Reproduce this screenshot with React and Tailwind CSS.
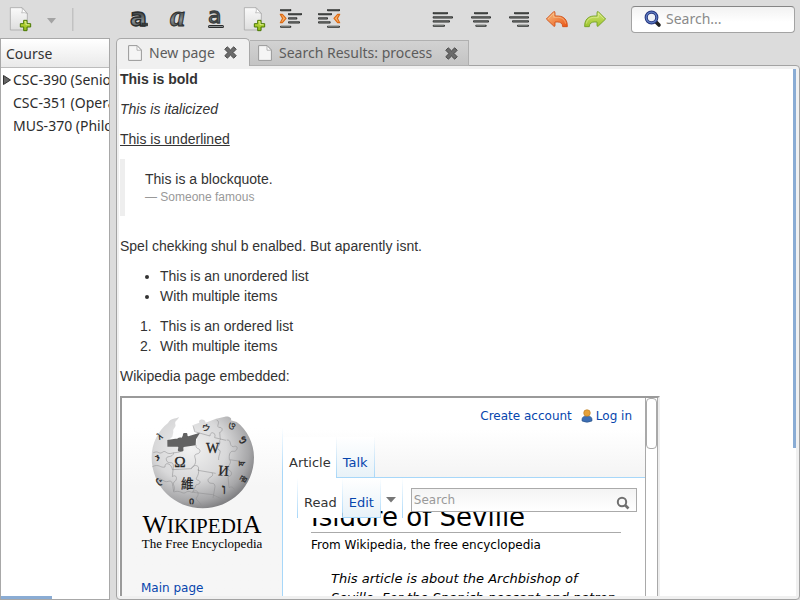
import React from "react";

const tools = "h-[38px] w-[38px] shrink-0";

function ToolButton({ label, box = "0 0 38 38", children }) {
  return (
    <button type="button" aria-label={label} title={label} className={tools}>
      <svg viewBox={box} className="block h-full w-full">{children}</svg>
    </button>
  );
}

function Bars({ rows }) {
  return rows.map(([x, y, w]) => (
    <g key={y}>
      <rect x={x} y={y - 3} width={w} height="6.5" rx="3" fill="#262827" />
      <rect x={x + 2} y={y - 1.5} width={w - 5} height="2.2" rx="1" fill="#8b8e8c" />
    </g>
  ));
}

function NewDoc() {
  return (
    <g>
      <path d="M31 23H66L82 40V90H31Z" fill="url(#paper)" stroke="#a9a9a9" strokeWidth="2.5" strokeLinejoin="round" />
      <path d="M66 23C68 30 67 35 65 39C71 37 77 38 82 41Z" fill="#fff" stroke="#a9a9a9" strokeWidth="2" />
      <path d="M71 61H81V71H92V81H81V92H71V81H61V71H71Z" fill="url(#plus)" stroke="#4b7a05" strokeWidth="3" strokeLinejoin="round" />
      <path d="M74 65H78V74H88" fill="none" stroke="#eaf6b0" strokeWidth="2" />
    </g>
  );
}

function PageIcon() {
  return (
    <svg viewBox="0 0 14 16" className="h-4 w-[14px] shrink-0">
      <path d="M.6.6H9.2L13.4 5V15.4H.6Z" fill="#f5f5f5" stroke="#999" strokeWidth="1" />
      <path d="M9 .8V5.2H13.3Z" fill="#fff" stroke="#a5a5a5" strokeWidth=".8" />
    </svg>
  );
}

function CloseButton() {
  return (
    <button type="button" aria-label="Close tab" className="shrink-0">
      <svg viewBox="0 0 13 13" className="block h-[13px] w-[13px]">
        <path d="M3.3.8L6.5 3.9L9.7.8L12.2 3.3L9 6.5L12.2 9.7L9.7 12.2L6.5 9.1L3.3 12.2L.8 9.7L4 6.5L.8 3.3Z" fill="#6b6b6b" stroke="#484848" strokeWidth="1" strokeLinejoin="round" />
      </svg>
    </button>
  );
}

function Toolbar() {
  return (
    <header className="flex h-[38px] shrink-0 items-center pr-[5px]">
      <svg className="absolute h-0 w-0" aria-hidden="true">
        <defs>
          <linearGradient id="paper" x2="0" y2="1"><stop stopColor="#fafafa" /><stop offset="1" stopColor="#dedede" /></linearGradient>
          <linearGradient id="plus" x2="0" y2="1"><stop stopColor="#c9e043" /><stop offset="1" stopColor="#8db81a" /></linearGradient>
          <linearGradient id="ink" x2="0" y2="1"><stop offset=".4" stopColor="#4a4f50" /><stop offset=".65" stopColor="#8a9092" /><stop offset=".85" stopColor="#4a4f50" /></linearGradient>
          <linearGradient id="undo" x2="1" y2="1"><stop stopColor="#f8c184" /><stop offset="1" stopColor="#ea5414" /></linearGradient>
          <linearGradient id="redo" x2="0" y2="1"><stop stopColor="#d3e573" /><stop offset="1" stopColor="#9cc42c" /></linearGradient>
        </defs>
      </svg>
      <ToolButton label="New page" box="0 0 114 114"><NewDoc /></ToolButton>
      <button type="button" aria-label="More new items" className="flex h-[38px] w-[26px] items-center justify-center">
        <svg viewBox="0 0 10 6" className="mt-1 ml-[2px] h-[6px] w-[10px]"><path d="M0 0H9L4.500 5.500Z" fill="#a3a3a3" /></svg>
      </button>
      <div className="mr-[46px] ml-2 h-[23px] w-[2px] border-l border-[#c2c2c2] bg-[#cfcfcf]" />
      <ToolButton label="Bold">
        <text x="10" y="25.500" fontFamily="DejaVu Sans" fontWeight="700" fontSize="25" fill="url(#ink)" stroke="#2b2d2d" strokeWidth="1.400">a</text>
        <path d="M22 23.300H27.500V25.800H22Z" fill="#3a3f40" stroke="#2b2d2d" strokeWidth=".8" strokeLinejoin="round" />
      </ToolButton>
      <ToolButton label="Italic">
        <text x="12" y="25.500" fontFamily="Liberation Serif" fontStyle="italic" fontWeight="700" fontSize="30" fill="url(#ink)" stroke="#2b2d2d" strokeWidth="1">a</text>
      </ToolButton>
      <ToolButton label="Underline">
        <text x="12" y="23" fontFamily="DejaVu Sans" fontSize="22" fill="url(#ink)" stroke="#3a3f40" strokeWidth="1.300">a</text>
        <rect x="12" y="25" width="16" height="3" rx="1.500" fill="#2b2d2d" />
        <rect x="13" y="26" width="14" height="1" fill="#8a9092" />
      </ToolButton>
      <ToolButton label="Insert page" box="0 0 114 114"><NewDoc /></ToolButton>
      <ToolButton label="Indent" box="246 0 114 114">
        <Bars rows={[[270, 30, 34], [294, 42, 42], [294, 55, 28], [294, 67, 36], [270, 80, 34]]} />
        <path d="M271 43H277L288 55L277 68H271L278 55Z" fill="#f9b06a" stroke="#dc6a12" strokeWidth="3.500" strokeLinejoin="round" />
      </ToolButton>
      <ToolButton label="Outdent" box="360 0 114 114">
        <Bars rows={[[411, 30, 39], [384, 42, 42], [384, 55, 30], [384, 67, 38], [411, 80, 39]]} />
        <path d="M449 43H443L432 55L443 68H449L442 55Z" fill="#f9b06a" stroke="#dc6a12" strokeWidth="3.500" strokeLinejoin="round" />
      </ToolButton>
      <div className="w-[76px] shrink-0" />
      <ToolButton label="Align left" box="12 0 114 114"><Bars rows={[[38, 39, 46], [38, 52, 61], [38, 64, 52], [38, 77, 37]]} /></ToolButton>
      <ToolButton label="Align center" box="126 0 114 114"><Bars rows={[[162, 39, 42], [153, 52, 60], [159, 64, 48], [166, 77, 34]]} /></ToolButton>
      <ToolButton label="Align right" box="240 0 114 114"><Bars rows={[[282, 39, 45], [267, 52, 60], [276, 64, 51], [291, 77, 36]]} /></ToolButton>
      <ToolButton label="Undo" box="354 0 114 114">
        <path d="M379 57L401 35Q405 33 405 39V48H415C432 49 443 60 442 80H428C428 70 421 66 413 66H405V76Q405 81 401 78Z" fill="url(#undo)" stroke="#cf4a12" strokeWidth="2.500" strokeLinejoin="round" />
        <path d="M384 57L401 40V52H416C427 53 435 60 437 71" fill="none" stroke="#fbd9a8" strokeWidth="2" opacity=".7" />
      </ToolButton>
      <ToolButton label="Redo" box="468 0 114 114">
        <path d="M557 57L535 35Q531 33 531 39V48H521C504 49 493 60 494 80H508C508 70 515 66 523 66H531V76Q531 81 535 78Z" fill="url(#redo)" stroke="#6f9c22" strokeWidth="2.500" strokeLinejoin="round" />
        <path d="M552 57L535 40V52H520C509 53 501 60 499 71" fill="none" stroke="#eef7b8" strokeWidth="2" opacity=".7" />
      </ToolButton>
      <label className="ml-[17px] flex h-[27px] min-w-0 flex-1 items-center rounded-[4px] border border-[#a3a3a3] border-t-[#858585] bg-gradient-to-b from-[#f2f2f2] to-white to-60% pl-3">
        <svg viewBox="0 0 18 18" className="h-[18px] w-[18px] shrink-0">
          <path d="M11.500 11.500L15 15" stroke="#222" strokeWidth="3.600" strokeLinecap="round" />
          <circle cx="7.500" cy="7.500" r="5.300" fill="#eef1f6" stroke="#26357f" strokeWidth="3.200" />
          <circle cx="7.500" cy="7.500" r="5.300" fill="none" stroke="#5d7cc0" strokeWidth="1.200" />
        </svg>
        <input type="text" aria-label="Search" placeholder="Search..." className="ml-1 w-full min-w-0 bg-transparent text-sm outline-none placeholder:text-[#8a8a8a]" />
      </label>
    </header>
  );
}

function Sidebar() {
  return (
    <aside className="relative w-[110px] shrink-0 overflow-hidden border border-[#a8a8a8] bg-white text-sm whitespace-nowrap text-[#333]">
      <h2 className="h-[29px] border-b border-[#bcbcbc] bg-gradient-to-b from-white to-[#e9e9e9] pl-[5px] leading-[29px]">Course</h2>
      <ul className="leading-[23px] text-[#2c2c2c]">
        <li className="flex items-center">
          <span className="flex w-3 shrink-0 pl-[2px]">
            <svg viewBox="0 0 8 10" className="h-[10px] w-2"><path d="M.5.5L7.500 5L.5 9.500Z" fill="#666" stroke="#333" /></svg>
          </span>
          CSC-390 (Senior
        </li>
        <li className="pl-3">CSC-351 (Opera</li>
        <li className="pl-3">MUS-370 (Philo</li>
      </ul>
      <div className="absolute bottom-0 left-0 h-[3px] w-[51px] bg-[#8aacd4]" />
    </aside>
  );
}

const glyphs = [
  ["Ω", 193, 230, 46, 0], ["W", 288, 189, 42, 0], ["И", 324, 256, 44, 4], ["維", 213, 294, 38, 0],
  ["ウ", 274, 120, 25, 12], ["ו", 336, 312, 46, 0], ["ی", 386, 160, 34, -20], ["λ", 148, 150, 28, -30],
  ["ও", 350, 108, 30, 40], ["ን", 134, 212, 28, 0], ["ث", 136, 266, 30, 60], ["ი", 238, 342, 30, 0], ["곰", 402, 280, 22, -60], ["ষ", 406, 228, 28, -90],
];

function WikiLogo() {
  return (
    <a href="#main" aria-label="Wikipedia main page" className="flex flex-col items-center font-['Liberation_Serif','Noto_Sans_CJK_SC',serif] text-black">
      <svg viewBox="120 75 315 285" className="h-[95px] w-[105px]">
        <defs>
          <radialGradient id="globe" cx=".38" cy=".35" r=".7">
            <stop stopColor="#f2f2f2" /><stop offset=".5" stopColor="#d8d8d9" /><stop offset=".82" stopColor="#a6a6a8" /><stop offset="1" stopColor="#77777a" />
          </radialGradient>
        </defs>
        <path d="M174 99C182 84 194 88 207 81C203 92 193 92 196 103C200 112 187 116 190 126L187 140L174 152L172 170L258 163L262 128L252 120L251 104L268 98C263 86 286 84 287 98L318 86L345 80C353 77 369 83 362 91L380 96C411 118 432 160 432 202C432 290 362 355 278 355C194 355 125 290 125 202C125 160 145 121 174 99Z" fill="url(#globe)" />
        <path d="M172 150L196 146C204 148 203 140 215 143C223 134 214 129 226 129C237 128 229 137 235 139L270 128L258 148L257 166L221 171C217 177 227 185 211 185C197 184 208 173 204 170L172 170Z" fill="#626262" />
        <g fill="none" stroke="#8f8f91" strokeWidth="1.700">
          <path d="M130 188C146 181 146 194 157 187C168 178 167 196 188 189L209 186M258 165C257 180 270 172 270 184C268 196 250 187 255 203C258 212 259 224 244 235" />
          <path d="M191 188C188 207 166 193 169 210C174 227 192 207 190 232L187 260M127 230C148 220 150 235 165 231C164 213 186 222 187 239L244 236C250 221 272 225 264 241L317 250" />
          <path d="M249 106L254 125L300 138C301 121 320 128 314 143L348 151M320 90C333 96 318 107 326 112C341 111 338 125 329 127L331 150" />
          <path d="M350 150C366 148 356 169 370 170C388 163 382 186 371 184C358 182 357 196 358 209L407 216M329 151C333 170 316 169 326 180C337 181 324 196 326 210" />
          <path d="M265 237C270 258 252 266 262 270C275 272 271 284 259 284L248 306M187 260C200 251 203 268 195 274C182 281 200 289 190 306M247 306C263 295 269 311 261 321C252 332 275 334 276 354" />
          <path d="M306 248C315 262 292 260 294 273C300 287 314 272 315 290L309 324M140 270C157 260 160 280 175 274C190 270 186 283 191 303M191 306C211 299 216 313 226 308C238 299 243 309 249 307L308 314L350 334M360 210C366 223 350 225 355 240C368 243 368 259 354 260L357 293C370 285 372 302 381 303" />
        </g>
        <g fill="#242424" stroke="#242424" strokeWidth=".8">
          {glyphs.map(([ch, x, y, size, turn]) => (
            <text key={ch} x={x} y={y} fontSize={size} transform={`rotate(${turn} ${x} ${y})`}>{ch}</text>
          ))}
        </g>
      </svg>
      <span className="mt-[3px] text-[21px] leading-[24px]"><span className="text-[26px]">W</span>IKIPEDI<span className="text-[26px]">A</span></span>
      <span className="-mt-px text-[13px] leading-[14px]">The Free Encyclopedia</span>
    </a>
  );
}

const edge = "bg-gradient-to-b from-transparent to-[#a7d7f9]";

function WikiFrame() {
  return (
    <section aria-label="Embedded Wikipedia page" className="mt-[10px] flex h-[300px] w-[540px] border-2 border-[#9a9a9a] border-r-[#eee] bg-white font-['DejaVu_Sans',sans-serif] text-[13px] leading-[20px] text-black">
      <div className="w-40 shrink-0 bg-gradient-to-b from-white from-10% to-[#f6f6f6] to-30% pt-[17px]">
        <WikiLogo />
        <a href="#main" className="mt-[27px] ml-[19px] block text-xs leading-5 text-[#0645ad]">Main page</a>
      </div>
      <div className="flex min-w-0 flex-1">
        <div className="w-px shrink-0 bg-gradient-to-b from-white from-10% to-[#a7d7f9] to-25%" />
        <div className="min-w-0 flex-1">
          <div className="flex h-[80px] flex-col border-b border-[#a7d7f9] bg-gradient-to-b from-white from-40% to-[#f4f4f4]">
            <nav className="flex h-[35px] shrink-0 items-center justify-end pr-[13px] text-xs text-[#0645ad]">
              <a href="#create">Create account</a>
              <svg viewBox="0 0 12 14" className="mr-[3px] ml-[9px] h-[14px] w-3">
                <path d="M1 10C1 6 11 6 11 10V12Q6 14.500 1 12Z" fill="#3c6eb4" stroke="#2d5487" strokeWidth=".6" />
                <circle cx="6" cy="4" r="3.300" fill="#e5a13a" stroke="#b97a1e" strokeWidth=".6" />
              </svg>
              <a href="#login">Log in</a>
            </nav>
            <nav className="mt-1 -mb-px flex h-[41px] shrink-0 leading-[51px]">
              <a href="#article" className="bg-white pr-[5px] pl-[6px] text-[#333]">Article</a>
              <div className={`w-px ${edge}`} />
              <a href="#talk" className="border-b border-[#a7d7f9] bg-gradient-to-b from-white to-[#e8f2f8] px-[6px] text-[#0645ad]">Talk</a>
              <div className={`w-px ${edge}`} />
            </nav>
          </div>
          <div className="relative z-10 flex h-10 items-start pr-2 pl-[14px]">
            <div className={`h-10 w-px ${edge}`} />
            <a href="#read" className="h-10 bg-white pr-[5px] pl-[6px] leading-[50px] text-[#333]">Read</a>
            <div className={`h-10 w-px ${edge}`} />
            <a href="#edit" className="h-10 border-b border-[#a7d7f9] bg-gradient-to-b from-white to-[#e8f2f8] px-[6px] leading-[50px] text-[#0645ad]">Edit</a>
            <div className={`h-10 w-px ${edge}`} />
            <button type="button" aria-label="More actions" className="flex h-10 w-[21px] items-center justify-center">
              <svg viewBox="0 0 10 6" className="mt-1 h-[6px] w-[10px]"><path d="M0 0H10L5 5.500Z" fill="#777" /></svg>
            </button>
            <div className={`mr-2 h-10 w-px ${edge}`} />
            <label className="mt-[10px] flex h-[24px] min-w-0 flex-1 items-center border border-[#aaa] bg-gradient-to-b from-[#f4f4f4] to-white pr-[6px] pl-[2px]">
              <input type="text" aria-label="Search Wikipedia" placeholder="Search" className="w-full min-w-0 bg-transparent text-xs outline-none placeholder:text-[#999]" />
              <svg viewBox="0 0 14 14" className="mt-[5px] h-[14px] w-[14px] shrink-0" fill="none" stroke="#707070">
                <circle cx="6" cy="6" r="4.200" strokeWidth="2" /><path d="M9 9L12.500 12.500" strokeWidth="2.600" />
              </svg>
            </label>
          </div>
          <div className="-mt-[20px] px-7 pr-[24px]">
            <h1 className="h-[35px] border-b border-[#aaa] text-[26px] leading-[38px] whitespace-nowrap">Isidore of Seville</h1>
            <p className="mt-[2px] text-xs leading-5">From Wikipedia, the free encyclopedia</p>
            <p className="mt-[14px] ml-5 leading-[19px] whitespace-nowrap italic">This article is about the Archbishop of<br />Seville. For the Spanish peasant and patron</p>
          </div>
        </div>
        <div className="w-[13px] shrink-0 border-x border-[#a9a9a9]">
          <div className="h-[51px] rounded-[4px] border border-[#a9a9a9] bg-white" />
        </div>
      </div>
    </section>
  );
}

const steps = ["This is an ordered list", "With multiple items"];

function Editor() {
  return (
    <article className="h-full overflow-hidden bg-white pl-px font-['Liberation_Sans',sans-serif] text-sm leading-5 text-[#333]">
      <p className="mb-[10px] font-bold">This is bold</p>
      <p className="mb-[10px] italic">This is italicized</p>
      <p className="mb-[10px] underline">This is underlined</p>
      <blockquote className="mb-5 h-[57px] border-l-[5px] border-[#eee] py-[10px] pl-5">
        <p>This is a blockquote.</p>
        <small className="block text-xs leading-[17px] text-[#999]">— Someone famous</small>
      </blockquote>
      <p className="mb-[10px]">Spel chekking shul b enalbed. But aparently isnt.</p>
      <ul className="mb-[10px] list-disc pl-10">
        <li>This is an unordered list</li>
        <li>With multiple items</li>
      </ul>
      <ol className="mb-[10px] pl-5">
        {steps.map((step, i) => (
          <li key={step} className="flex"><span className="w-5">{i + 1}.</span>{step}</li>
        ))}
      </ol>
      <p>Wikipedia page embedded:</p>
      <WikiFrame />
    </article>
  );
}

export default function App() {
  return (
    <div className="flex h-screen flex-col overflow-hidden bg-[#dcdcdc] font-['Noto_Sans',sans-serif]">
      <Toolbar />
      <div className="flex min-h-0 flex-1 gap-[6px]">
        <Sidebar />
        <main className="flex min-w-0 flex-1 flex-col">
          <div role="tablist" className="z-10 -mb-px flex h-[28px] shrink-0 items-end text-sm text-[#5c5c5c]">
            <div role="tab" aria-selected="true" className="flex h-[28px] w-[134px] items-center rounded-t-[5px] border border-b-0 border-[#a8a8a8] bg-[#f0f0f0] pr-3 pl-[11px]">
              <PageIcon />
              <span className="ml-[7px] flex-1 whitespace-nowrap">New page</span>
              <CloseButton />
            </div>
            <div role="tab" aria-selected="false" className="flex h-[26px] w-[219px] items-center border border-l-0 border-[#b0b0b0] bg-gradient-to-b from-[#d2d2d2] to-[#c4c4c4] pr-[10px] pl-2">
              <PageIcon />
              <span className="ml-[7px] flex-1 whitespace-nowrap">Search Results: process</span>
              <CloseButton />
            </div>
          </div>
          <div className="relative min-h-0 flex-1 rounded-b-[4px] rounded-tr-[4px] border border-[#a3a3a3] bg-[#f0f0f0] p-[3px] pl-[2px]">
            <Editor />
            <div className="absolute top-[3px] right-[3px] h-[379px] w-[3px] bg-[#8aacd4]" />
          </div>
        </main>
      </div>
    </div>
  );
}
